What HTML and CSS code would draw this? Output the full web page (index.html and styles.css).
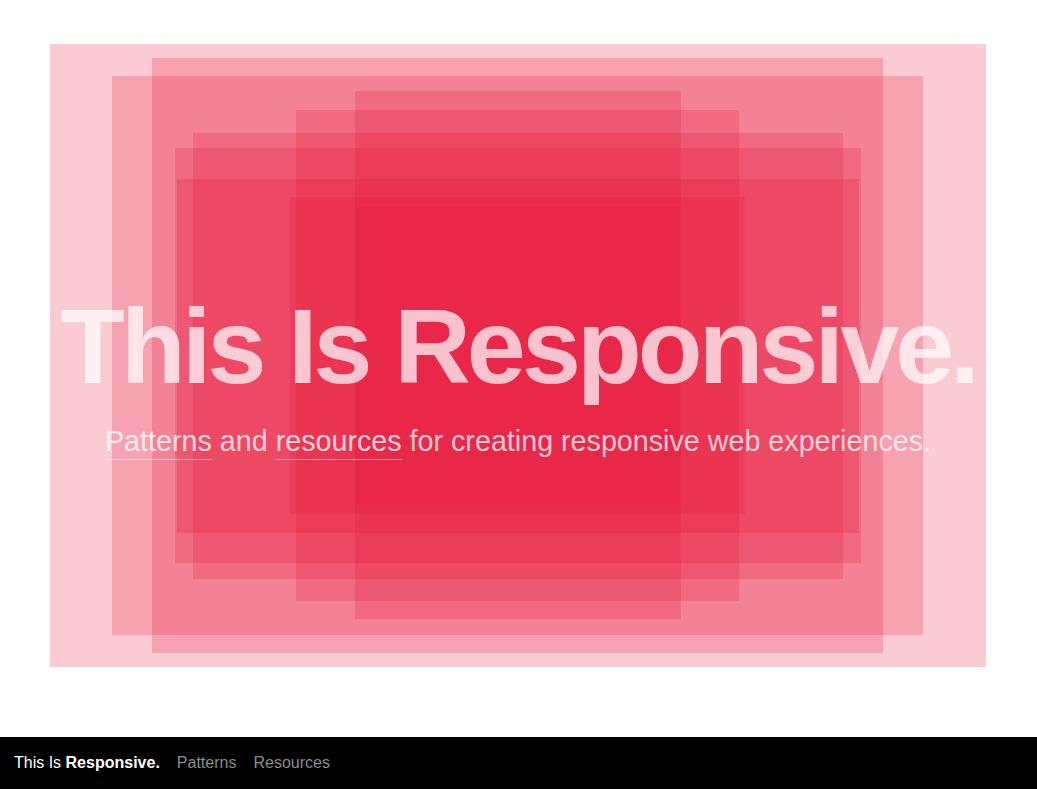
FILE: index.html
```html
<!DOCTYPE html>
<html lang="en">
<head>
<meta charset="utf-8">
<title>This Is Responsive</title>
<link rel="stylesheet" href="styles.css">
</head>
<body>
<main class="hero">
  <div class="layer l-a"></div>
  <div class="layer l-b"></div>
  <div class="layer l-c"></div>
  <div class="layer l-d"></div>
  <div class="layer l-e"></div>
  <div class="layer l-f"></div>
  <div class="layer l-g"></div>
  <div class="layer l-h"></div>
  <div class="layer l-i"></div>
  <div class="hero-text">
    <h1 class="title">This Is Responsive.</h1>
    <p class="subtitle"><a href="#" class="sub-link">Patterns</a> and <a href="#" class="sub-link">resources</a> for creating responsive web experiences.</p>
  </div>
</main>
<footer class="footer">
  <span class="brand">This Is <strong>Responsive.</strong></span>
  <a href="#" class="nav-link">Patterns</a>
  <a href="#" class="nav-link">Resources</a>
</footer>
</body>
</html>
```

FILE: styles.css
```css
html, body {
  margin: 0;
  padding: 0;
  background: #ffffff;
}

body {
  font-family: "Liberation Sans", Arial, Helvetica, sans-serif;
  display: flex;
  flex-direction: column;
  height: 789px;
  overflow: hidden;
}

.hero {
  position: relative;
  margin: 44px 51px 0 50px;
  height: 623px;
  background: rgba(232, 24, 60, 0.225);
  flex: none;
}

.layer {
  position: absolute;
  background: rgba(232, 24, 60, 0.225);
}

.l-a { left: 102px; top: 14px;  width: 731px; height: 595px; }
.l-b { left: 62px;  top: 32px;  width: 811px; height: 559px; }
.l-c { left: 305px; top: 47px;  width: 326px; height: 528px; }
.l-d { left: 246px; top: 66px;  width: 443px; height: 491px; }
.l-e { left: 143px; top: 89px;  width: 650px; height: 446px; }
.l-f { left: 125px; top: 104px; width: 686px; height: 415px; }
.l-g { left: 127px; top: 135px; width: 682px; height: 354px; }
.l-h { left: 240px; top: 153px; width: 455px; height: 317px; }
.l-i { left: 305px; top: 163px; width: 326px; height: 297px; }

.hero-text {
  position: relative;
  padding-top: 249px;
  display: flex;
  flex-direction: column;
  align-items: center;
  text-align: center;
  white-space: nowrap;
}

.title {
  margin: 0;
  font-size: 106px;
  line-height: 1;
  font-weight: 700;
  letter-spacing: -3.9px;
  color: rgba(255, 255, 255, 0.72);
}

.subtitle {
  margin: 28px 0 0;
  font-size: 28.7px;
  line-height: 1;
  color: rgba(255, 255, 255, 0.75);
}

.sub-link {
  color: rgba(255, 255, 255, 0.8);
  text-decoration: none;
  border-bottom: 1px solid rgba(255, 255, 255, 0.55);
  padding-bottom: 2px;
}

.footer {
  margin-top: auto;
  height: 52px;
  background: #000000;
  display: flex;
  align-items: center;
  gap: 17px;
  padding: 0 14px;
  font-size: 16px;
  flex: none;
}

.brand {
  color: #ffffff;
}

.brand strong {
  font-weight: 700;
}

.nav-link {
  color: #8c8c8c;
  text-decoration: none;
}
```
